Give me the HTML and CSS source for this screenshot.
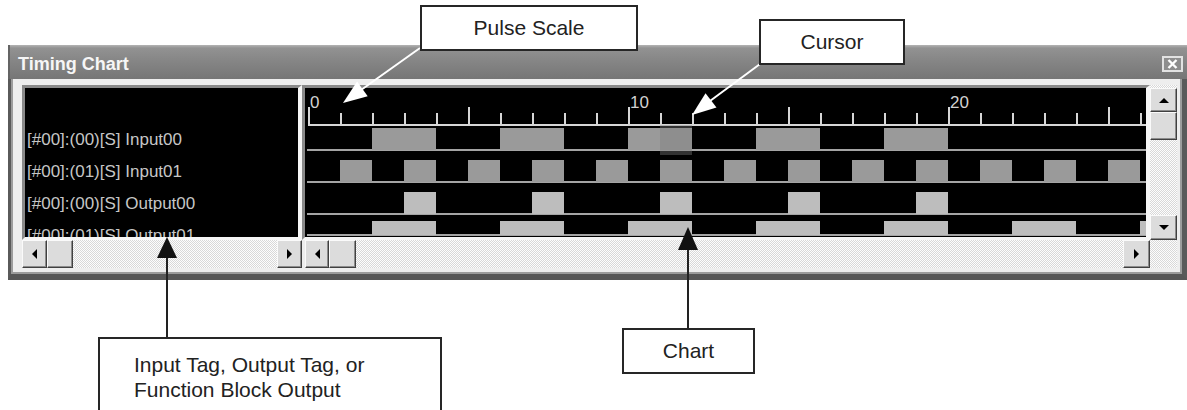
FILE: index.html
```html
<!DOCTYPE html>
<html>

<head>
    <title>Timing Chart</title>
    <link rel="stylesheet" href="styles.css">
</head>

<body>
    <div class="window">
        <div class="titlebar">
            <span class="title">Timing Chart</span>
            <svg class="close-btn" width="21" height="16" viewBox="0 0 21 16">
                <rect x="1" y="1" width="19" height="14" fill="#8e8e8e" stroke="#e2e2e2" stroke-width="2" />
                <path d="M6.5 4 L14.5 12 M14.5 4 L6.5 12" stroke="#fff" stroke-width="2.4" />
            </svg>
        </div>
        <div class="window-body">
            <div class="tag-pane">
                <div class="tag-list">
                    <div class="tag">[#00]:(00)[S] Input00</div>
                    <div class="tag">[#00]:(01)[S] Input01</div>
                    <div class="tag">[#00]:(00)[S] Output00</div>
                    <div class="tag">[#00]:(01)[S] Output01</div>
                </div>
            </div>
            <div class="chart-pane">
                <svg id="chart" width="841" height="149" viewBox="0 0 841 149"></svg>
            </div>
            <div class="trough vscroll">
                <div class="sb-btn up"></div>
                <div class="sb-thumb"></div>
                <div class="sb-spacer"></div>
                <div class="sb-btn down"></div>
            </div>
            <div class="trough hscroll tags-scroll">
                <div class="sb-btn left"></div>
                <div class="sb-thumb"></div>
                <div class="sb-spacer"></div>
                <div class="sb-btn right"></div>
            </div>
            <div class="trough hscroll chart-scroll">
                <div class="sb-btn left"></div>
                <div class="sb-thumb"></div>
                <div class="sb-spacer"></div>
                <div class="sb-btn right"></div>
            </div>
            <div class="trough corner"></div>
        </div>
    </div>

    <!-- callout leaders -->
    <svg class="leaders" width="1187" height="410" viewBox="0 0 1187 410">
        <line x1="420" y1="48" x2="361" y2="90" stroke="#fff" stroke-width="2" />
        <polygon points="343,103 367.7,96.2 357.1,81.6" fill="#fff" />
        <line x1="760" y1="64" x2="710" y2="101" stroke="#fff" stroke-width="2" />
        <polygon points="692,115 716.5,107.4 705.5,93.2" fill="#fff" />
        <line x1="167" y1="255" x2="167" y2="338" stroke="#222" stroke-width="2" />
        <polygon points="167,237 157,258 177,258" fill="#111" />
        <line x1="688" y1="248" x2="688" y2="330" stroke="#222" stroke-width="2" />
        <polygon points="688,227 678,250 698,250" fill="#111" />
    </svg>

    <div class="callout pulse-scale">Pulse Scale</div>
    <div class="callout cursor-label">Cursor</div>
    <div class="callout chart-label">Chart</div>
    <div class="callout tag-label">Input Tag, Output Tag, or<br>Function Block Output</div>

    <script>
        const svgNS = 'http://www.w3.org/2000/svg';
        const chart = document.getElementById('chart');
        const STEP = 32;   // one pulse
        const X0 = 3;      // first tick
        const WIDTH = 841;

        function add(tag, attrs) {
            const el = document.createElementNS(svgNS, tag);
            for (const key in attrs) {
                el.setAttribute(key, attrs[key]);
            }
            chart.appendChild(el);
            return el;
        }

        // Pulse scale
        add('rect', { x: X0, y: 36, width: WIDTH - X0, height: 2, class: 'ruler' });
        for (let k = 0; k <= 26; k++) {
            const major = k % 5 === 0;
            add('rect', {
                x: X0 + k * STEP,
                y: major ? 19 : 25,
                width: 2,
                height: major ? 18 : 12,
                class: 'ruler'
            });
            if (k % 10 === 0) {
                const label = add('text', { x: X0 + k * STEP + 2, y: 20, class: 'scale-num' });
                label.textContent = k;
            }
        }

        // Signals: [start, end] in pulses
        const odd = [];
        for (let k = 1; k < 26; k += 2) {
            odd.push([k, k + 1]);
        }

        const signals = [
            { top: 40, bottom: 61, type: 'input', pulses: [[2, 4], [6, 8], [10, 12], [14, 16], [18, 20]] },
            { top: 72, bottom: 93, type: 'input', pulses: odd },
            { top: 104, bottom: 125, type: 'output', pulses: [[3, 4], [7, 8], [11, 12], [15, 16], [19, 20]] },
            { top: 133, bottom: 146, type: 'output', pulses: [[2, 4], [6, 8], [10, 12], [14, 16], [18, 20], [22, 24], [26, 28]] }
        ];

        signals.forEach(signal => {
            add('rect', { x: 2, y: signal.bottom, width: WIDTH - 2, height: 2, class: 'low' });
            signal.pulses.forEach(([start, end]) => {
                add('rect', {
                    x: X0 + start * STEP,
                    y: signal.top,
                    width: (end - start) * STEP,
                    height: signal.bottom - signal.top + 1,
                    class: 'high ' + signal.type
                });
            });
        });

        // Cursor
        add('rect', { x: X0 + 11 * STEP, y: 37, width: STEP, height: 30, class: 'cursor' });
    </script>
</body>

</html>
```

FILE: styles.css
```css
body {
    margin: 0;
    width: 1187px;
    height: 410px;
    overflow: hidden;
    position: relative;
    background: #fff;
    font-family: "Liberation Sans", Arial, sans-serif;
}

.window {
    margin: 45px 0 0 8px;
    width: 1179px;
}

.titlebar {
    height: 34px;
    box-sizing: border-box;
    padding: 4px 4px 0 8px;
    display: flex;
    align-items: center;
    justify-content: space-between;
    background: linear-gradient(#b4b4b4 0, #929292 3px, #868686 45%, #767676 100%);
    border-left: 2px solid #646464;
}

.title {
    color: #f6f6f6;
    font-size: 18px;
    font-weight: bold;
}

.window-body {
    display: grid;
    grid-template-columns: 280px 848px 27px;
    grid-template-rows: 155px 28px;
    padding: 6px 5px 6px 11px;
    background: #eeeeee;
    border-left: 3px solid #5a5a5a;
    border-right: 5px solid #5a5a5a;
    border-bottom: 6px solid #575757;
    box-shadow: inset 2px 0 0 #9c9c9c, inset -2px -2px 0 #9c9c9c;
}

.tag-pane,
.chart-pane {
    background: #000;
    border: 3px solid;
    border-right-width: 4px;
    border-color: #8a8a8a #f6f6f6 #f6f6f6 #8a8a8a;
    overflow: hidden;
}

#chart {
    display: block;
}

.tag-list {
    padding: 36px 0 0 2px;
}

.tag {
    height: 32px;
    line-height: 32px;
    font-size: 17px;
    color: #c6c6c6;
    white-space: nowrap;
}

/* chart drawing */
.ruler {
    fill: #d6d6d6;
}

.scale-num {
    fill: #d2d2d2;
    font-size: 17px;
    font-family: "Liberation Sans", Arial, sans-serif;
}

.low {
    fill: #a4a4a4;
}

.high.input {
    fill: #9a9a9a;
}

.high.output {
    fill: #bdbdbd;
}

.cursor {
    fill: #7c7c7c;
    opacity: 0.4;
}

/* scroll bars */
.trough {
    display: flex;
    background: repeating-conic-gradient(#fdfdfd 0 25%, #d8d8d8 0 50%) 0 0 / 2px 2px;
}

.vscroll {
    flex-direction: column;
}

.sb-btn,
.sb-thumb {
    box-sizing: border-box;
    display: flex;
    align-items: center;
    justify-content: center;
    background: #dcdcdc;
    border: 1px solid;
    border-color: #fafafa #404040 #404040 #fafafa;
    box-shadow: inset -1px -1px 0 #8c8c8c;
}

.sb-spacer {
    flex: 1;
}

.vscroll .up {
    margin-top: 3px;
    height: 24px;
}

.vscroll .sb-thumb {
    height: 28px;
}

.vscroll .down {
    height: 25px;
}

.tags-scroll .sb-btn {
    width: 25px;
}

.tags-scroll .sb-thumb {
    width: 26px;
}

.chart-scroll {
    margin-left: 3px;
}

.chart-scroll .left {
    width: 24px;
}

.chart-scroll .sb-thumb {
    width: 27px;
}

.chart-scroll .right {
    width: 27px;
}

.sb-btn::before {
    content: '';
    width: 0;
    height: 0;
}

.up::before {
    border-left: 5px solid transparent;
    border-right: 5px solid transparent;
    border-bottom: 5px solid #000;
}

.down::before {
    border-left: 5px solid transparent;
    border-right: 5px solid transparent;
    border-top: 5px solid #000;
}

.left::before {
    border-top: 5px solid transparent;
    border-bottom: 5px solid transparent;
    border-right: 5px solid #000;
}

.right::before {
    border-top: 5px solid transparent;
    border-bottom: 5px solid transparent;
    border-left: 5px solid #000;
}

/* callouts */
.leaders {
    position: absolute;
    left: 0;
    top: 0;
}

.callout {
    position: absolute;
    box-sizing: border-box;
    height: 46px;
    border: 2px solid #262626;
    background: #fff;
    color: #222;
    font-size: 21px;
    line-height: 42px;
    text-align: center;
}

.pulse-scale {
    left: 420px;
    top: 5px;
    width: 218px;
}

.cursor-label {
    left: 759px;
    top: 19px;
    width: 146px;
}

.chart-label {
    left: 622px;
    top: 328px;
    width: 133px;
}

/* runs off the bottom of the picture */
.tag-label {
    left: 98px;
    top: 337px;
    width: 344px;
    height: 73px;
    border-bottom: none;
    padding: 13px 0 0 34px;
    line-height: 25px;
    text-align: left;
}
```
